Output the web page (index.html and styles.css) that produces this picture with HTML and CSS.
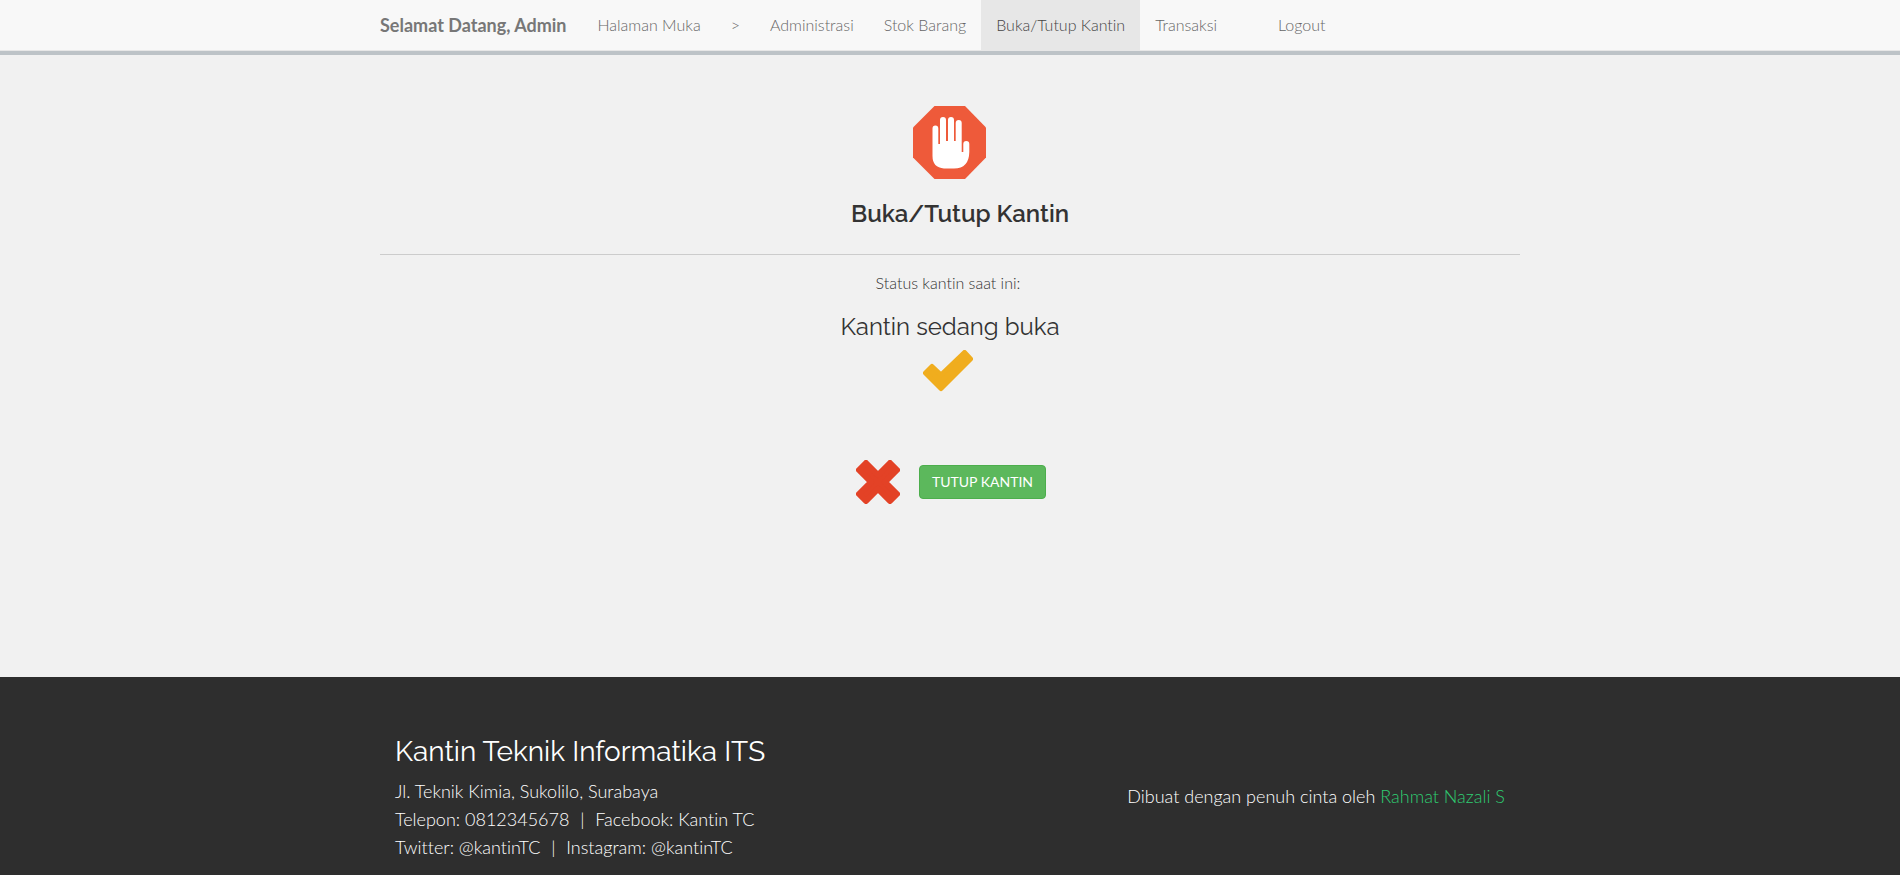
FILE: index.html
```
<!DOCTYPE html>
<html lang="id">
<head>
<meta charset="utf-8">
<meta name="viewport" content="width=device-width, initial-scale=1">
<title>Buka/Tutup Kantin</title>
<link rel="stylesheet" href="styles.css">
</head>
<body>
<nav class="navbar">
  <div class="container navbar-inner">
    <a class="brand" href="#">Selamat Datang, Admin</a>
    <ul class="menu">
      <li><a href="#">Halaman Muka</a></li>
      <li><a href="#">&gt;</a></li>
      <li><a href="#">Administrasi</a></li>
      <li><a href="#">Stok Barang</a></li>
      <li><a class="active" href="#">Buka/Tutup Kantin</a></li>
      <li><a href="#">Transaksi</a></li>
      <li class="menu-last"><a href="#">Logout</a></li>
    </ul>
  </div>
</nav>

<main class="container main">
  <svg class="icon-stop" viewBox="0 0 73 73" aria-hidden="true">
    <path fill="#ee5a3a" d="M21.500 0H52L73 21.500V51.500L52 73H21.500L0 51.500V21.500Z"/>
    <path fill="#fff" d="M19.500 22.500a2.900 2.900 0 0 1 5.800 0V38h1.700V14a3 3 0 0 1 6 0V35h2V14a3 3 0 0 1 6 0V35h1.700V17a3 3 0 0 1 6 0V46h1.600V38a2.900 2.900 0 0 1 6 0V46Q56 62.500 41 62.500H31Q19.500 61.500 19.500 50Z"/>
  </svg>
  <h1 class="title">Buka/Tutup Kantin</h1>
  <hr class="rule">
  <p class="label">Status kantin saat ini:</p>
  <h2 class="status">Kantin sedang buka</h2>
  <svg class="icon-check" viewBox="0 0 50 42" aria-hidden="true">
    <path fill="#f0ad1e" stroke="#f0ad1e" stroke-width="5" stroke-linejoin="round" d="M2.500 23L9 16.500L18 25L41.500 2.500L47.500 9L18 38.500Z"/>
  </svg>
  <form class="actions">
    <svg class="icon-cross" viewBox="0 0 44 44" aria-hidden="true">
      <path fill="#e34226" stroke="#e34226" stroke-width="6" stroke-linejoin="round" d="M10 3L22 15L34 3L41 10L29 22L41 34L34 41L22 29L10 41L3 34L15 22L3 10Z"/>
    </svg>
    <button class="btn" type="button">TUTUP KANTIN</button>
  </form>
</main>

<footer class="footer">
  <div class="container footer-inner">
    <div class="contact">
      <h3 class="footer-title">Kantin Teknik Informatika ITS</h3>
      <p>Jl. Teknik Kimia, Sukolilo, Surabaya</p>
      <p>Telepon: 0812345678 &nbsp;<span class="bar">|</span>&nbsp; Facebook: Kantin TC</p>
      <p>Twitter: @kantinTC &nbsp;<span class="bar">|</span>&nbsp; Instagram: @kantinTC</p>
    </div>
    <p class="credit">Dibuat dengan penuh cinta oleh <a href="#">Rahmat Nazali S</a></p>
  </div>
</footer>
</body>
</html>
```
FILE: styles.css
```
* { box-sizing: border-box; }

body {
  margin: 0;
  min-height: 100vh;
  display: flex;
  flex-direction: column;
  background: #f1f1f1;
  color: #333;
  font-family: Lato, "Liberation Sans", sans-serif;
  font-size: 16px;
  font-weight: 300;
  font-variant-ligatures: none;
  line-height: 20px;
}

h1, h2, h3, p, ul { margin: 0; padding: 0; }

a { text-decoration: none; }

.container {
  width: 100%;
  max-width: 1170px;
  margin: 0 auto;
  padding: 0 15px;
}

.navbar {
  background: #f8f8f8;
  border-bottom: 4px solid #bdc3c7;
  box-shadow: inset 0 -1px #e7e7e7;
}

.navbar-inner { display: flex; flex-wrap: wrap; }

.brand {
  padding: 15px 16px 16px 0;
  color: #777;
  font-size: 18px;
  font-weight: 700;
}

.menu { display: flex; flex-wrap: wrap; list-style: none; }

.menu a {
  display: block;
  padding: 15px 15px 16px;
  color: #666;
}

.menu .active { background: #e7e7e7; color: #444; }

.menu-last { margin-left: 31px; }

.main {
  flex: 1;
  display: flex;
  flex-direction: column;
  align-items: center;
  padding-top: 51px;
  padding-bottom: 40px;
}

.icon-stop { width: 73px; height: 73px; margin-right: 1px; }

.title, .status, .footer-title { font-family: Raleway, Lato, sans-serif; }

.title {
  margin-top: 21px;
  padding-left: 20px;
  font-size: 24px;
  font-weight: 600;
  line-height: 28px;
}

.rule {
  width: 100%;
  margin: 26px 0 18px;
  border: 0;
  border-top: 1px solid #ccc;
}

.label { padding-right: 4px; }

.status {
  margin-top: 20px;
  font-size: 24px;
  font-weight: 400;
  line-height: 28px;
}

.icon-check { width: 50px; height: 42px; margin-top: 9px; margin-right: 4px; }

.actions {
  display: flex;
  align-items: center;
  gap: 19px;
  margin-top: 68px;
  padding-left: 2px;
}

.icon-cross { width: 44px; height: 44px; }

.btn {
  padding: 6px 12px;
  border: 1px solid #4cae4c;
  border-radius: 4px;
  background: #5cb85c;
  color: #fff;
  font: 400 14px/20px Lato, sans-serif;
}

.footer {
  background: #2e2e2e;
  color: #fff;
  font-size: 18px;
  line-height: 28px;
}

.footer-inner {
  display: flex;
  flex-wrap: wrap;
  justify-content: space-between;
  align-items: center;
  padding: 57px 30px 14px;
}

.footer-title {
  margin-bottom: 7px;
  font-size: 28px;
  font-weight: 400;
  line-height: 36px;
}

.credit { padding-bottom: 4px; }

.credit a { color: #2ecc71; }

.bar { margin: 0 1px; }
```
